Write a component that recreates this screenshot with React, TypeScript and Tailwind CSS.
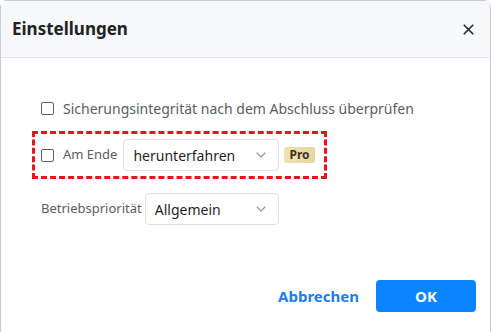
import { ChevronDown, X } from "lucide-react";

const font = { fontFamily: '"Noto Sans", "Open Sans", Arial, sans-serif' };

function Checkbox() {
  return <span className="block h-[13px] w-[13px] shrink-0 rounded-[2px] border-[1.5px] border-[#5b5f66] bg-white" />;
}

function Select({ value, width }: { value: string; width: string }) {
  return (
    <div
      className={`flex h-[32px] ${width} items-center justify-between rounded-[4px] border border-[#dcdfe4] bg-white pl-[9px] pr-[9px]`}
    >
      <span className="text-[14px] text-[#1f1f1f]">{value}</span>
      <ChevronDown size={16} strokeWidth={1.6} className="text-[#8d929b]" />
    </div>
  );
}

export default function App() {
  return (
    <div className="h-[332px] w-[491px] overflow-hidden bg-white" style={font}>
      <div className="flex h-full flex-col rounded-t-[7px] border border-b-0 border-[#c8ccd3]">
        {/* Header */}
        <div className="flex h-[57px] shrink-0 items-center justify-between border-b border-[#e2e4e8] bg-[#f7f8fa] pl-[11px] pr-[13px]">
          <h1 className="text-[17px] font-bold text-[#222]">Einstellungen</h1>
          <X size={17} strokeWidth={2.4} className="text-[#2b2b2b]" />
        </div>

        {/* Body */}
        <div className="flex flex-1 flex-col pl-[31px] pr-[14px] pt-[40px]">
          <div className="flex h-[20px] items-center gap-[9px] pl-[9px]">
            <Checkbox />
            <span className="text-[14px] text-[#5a5d63]">Sicherungsintegrität nach dem Abschluss überprüfen</span>
          </div>

          <div className="mt-[13px] flex h-[48px] w-[295px] items-center border-[3px] border-dashed border-[#e8141b] pl-[6px]">
            <Checkbox />
            <span className="ml-[9px] text-[13px] text-[#5a5d63]">Am Ende</span>
            <div className="ml-[6px]">
              <Select value="herunterfahren" width="w-[156px]" />
            </div>
            <span className="ml-[5px] rounded-[3px] bg-gradient-to-r from-[#f2e2b3] to-[#e9d59f] px-[5px] text-[12px] font-bold leading-[16px] text-[#3d3222]">
              Pro
            </span>
          </div>

          <div className="mt-[14px] flex items-center pl-[9px]">
            <span className="text-[13px] text-[#5a5d63]">Betriebspriorität</span>
            <div className="ml-[3px]">
              <Select value="Allgemein" width="w-[134px]" />
            </div>
          </div>

          <div className="mt-auto mb-[20px] flex items-center justify-end gap-[17px]">
            <button className="text-[15px] font-bold text-[#1a7ef2]">Abbrechen</button>
            <button className="h-[32px] w-[100px] rounded-[4px] bg-[#0b85ff] text-[15px] font-bold text-white">OK</button>
          </div>
        </div>
      </div>
    </div>
  );
}
